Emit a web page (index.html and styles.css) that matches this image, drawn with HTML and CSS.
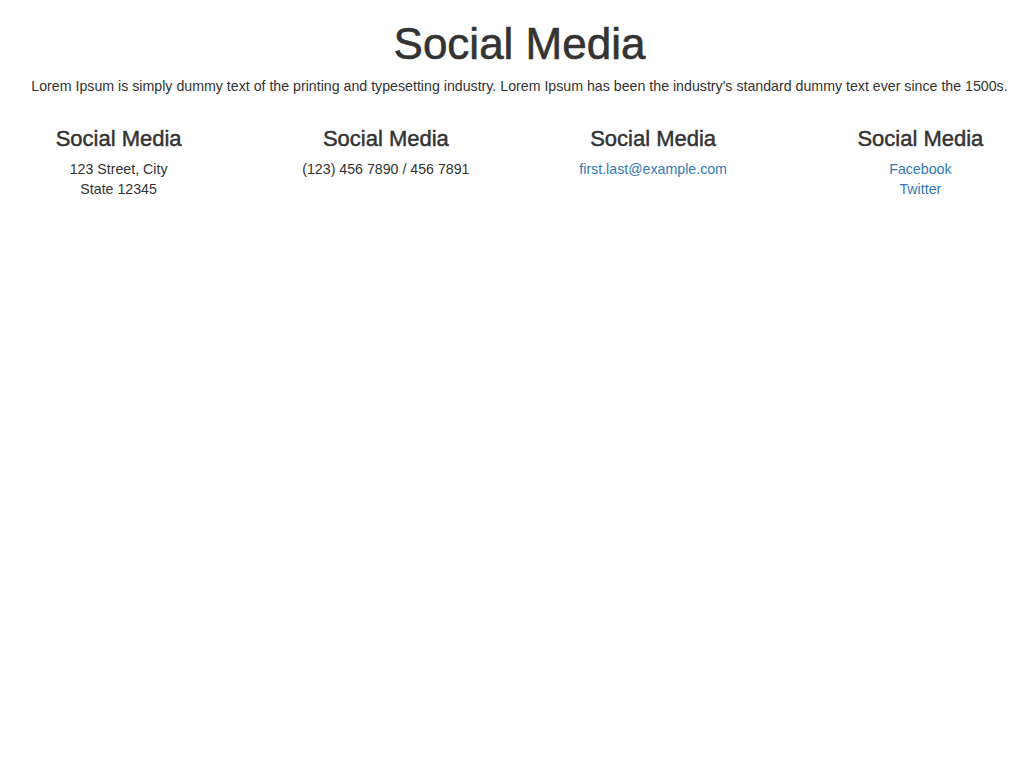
FILE: index.html
```html
<!DOCTYPE html>
<html>
<head>
<meta charset="utf-8">
<link rel="stylesheet" href="styles.css">
</head>
<body>
<div class="container">
  <h1 class="title">Social Media</h1>
  <p class="lead">Lorem Ipsum is simply dummy text of the printing and typesetting industry. Lorem Ipsum has been the industry's standard dummy text ever since the 1500s.</p>
  <div class="row">
    <div class="col">
      <h3 class="col-title">Social Media</h3>
      <p class="info">123 Street, City<br>State 12345</p>
    </div>
    <div class="col">
      <h3 class="col-title">Social Media</h3>
      <p class="info">(123) 456 7890 / 456 7891</p>
    </div>
    <div class="col">
      <h3 class="col-title">Social Media</h3>
      <p class="info"><a href="#">first.last@example.com</a></p>
    </div>
    <div class="col">
      <h3 class="col-title">Social Media</h3>
      <p class="info"><a href="#">Facebook</a><br><a href="#">Twitter</a></p>
    </div>
  </div>
</div>
</body>
</html>
```
FILE: styles.css
```css
html, body {
  margin: 0;
  padding: 0;
  overflow-x: hidden;
  background: #fff;
}
body {
  font-family: "Liberation Sans", Arial, sans-serif;
  font-size: 14.2px;
  line-height: 20px;
  color: #333;
}
.container {
  width: 1039px;
  text-align: center;
}
.title {
  font-size: 44px;
  font-weight: 500;
  line-height: 48px;
  margin: 20px 0 8px;
  -webkit-text-stroke: 0.6px #333;
}
.lead {
  margin: 0 0 10px;
}
.row {
  display: flex;
  margin: 0 -15px;
  padding-top: 10px;
}
.col {
  flex: 1 1 0;
  padding: 0 15px;
}
.col-title {
  font-size: 22px;
  font-weight: 500;
  line-height: 26px;
  margin: 10px 0 7px;
  -webkit-text-stroke: 0.45px #333;
}
.info {
  margin: 0;
}
a {
  color: #337ab7;
  text-decoration: none;
}
```
